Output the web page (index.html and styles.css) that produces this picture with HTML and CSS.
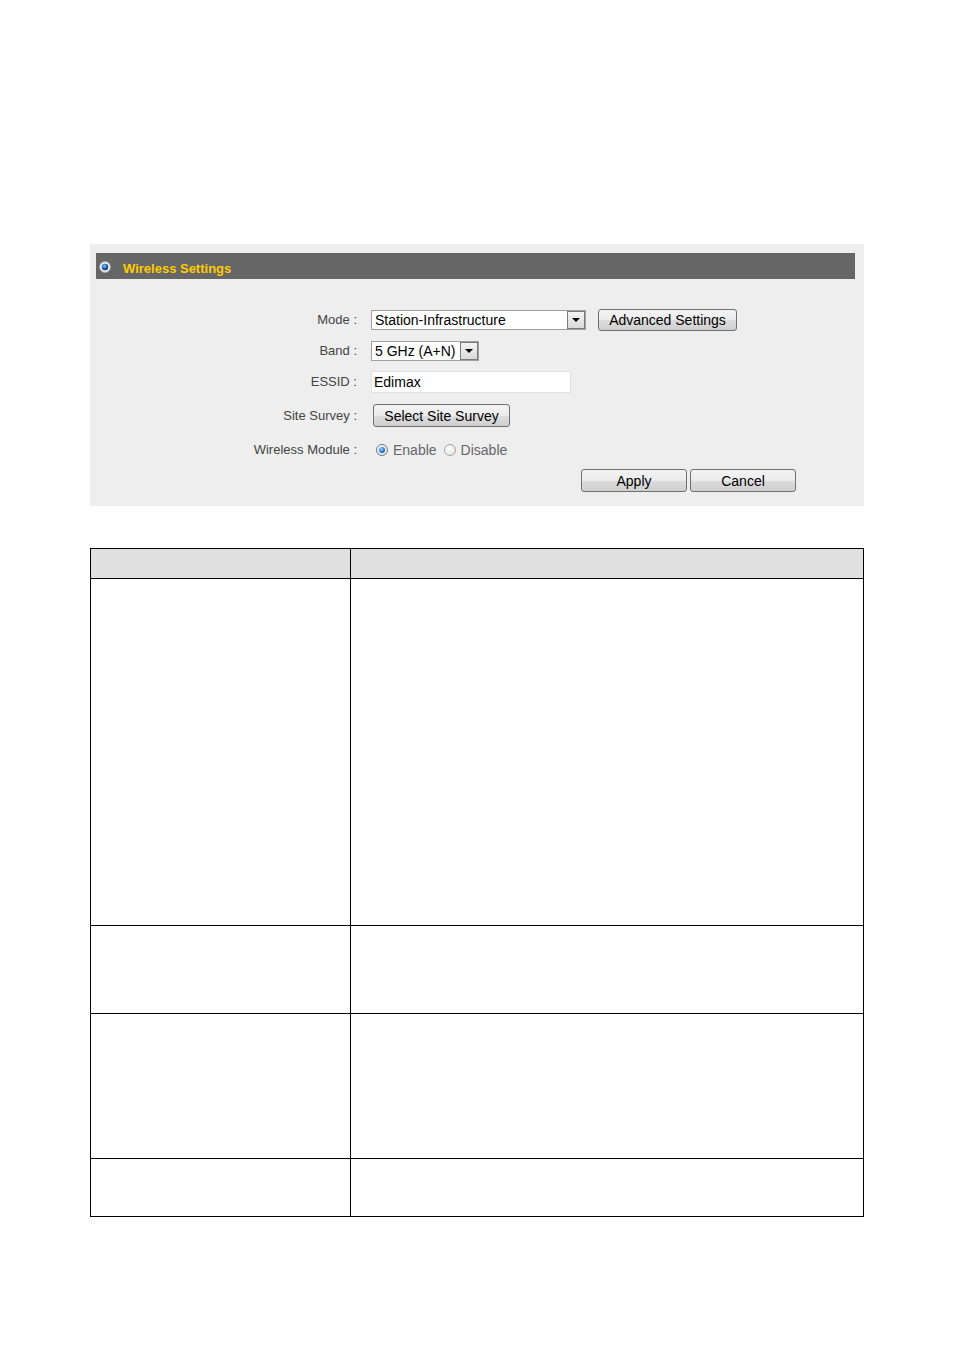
FILE: index.html
```html
<!DOCTYPE html>
<html lang="en">
  <head>
    <meta charset="UTF-8" />
    <meta name="viewport" content="width=device-width, initial-scale=1.0" />
    <title>Wireless Settings</title>
    <link rel="stylesheet" href="styles.css">
  </head>
  <body>
    <div class="page">
      <!-- settings panel -->
      <div class="panel">
        <div class="panel-title">
          <svg class="bullet" width="12" height="12" viewBox="0 0 12 12">
            <defs>
              <radialGradient id="dot" cx="40%" cy="35%" r="60%">
                <stop offset="0%" stop-color="#8fd0ff" />
                <stop offset="60%" stop-color="#1a6cb8" />
                <stop offset="100%" stop-color="#0b3d70" />
              </radialGradient>
            </defs>
            <circle cx="6" cy="6" r="5.5" fill="#e8ecf0" stroke="#9aa3ab" stroke-width="0.8" />
            <circle cx="6" cy="6" r="3.2" fill="url(#dot)" />
          </svg>
          <span class="title-text">Wireless Settings</span>
        </div>

        <div class="form">
          <div class="row">
            <div class="label">Mode :</div>
            <div class="control">
              <div class="select mode">
                <span class="value">Station-Infrastructure</span>
                <span class="arrow"></span>
              </div>
              <button class="btn adv">Advanced Settings</button>
            </div>
          </div>
          <div class="row">
            <div class="label">Band :</div>
            <div class="control">
              <div class="select band">
                <span class="value">5 GHz (A+N)</span>
                <span class="arrow"></span>
              </div>
            </div>
          </div>
          <div class="row">
            <div class="label">ESSID :</div>
            <div class="control">
              <input type="text" class="text-input" value="Edimax" />
            </div>
          </div>
          <div class="row tall">
            <div class="label">Site Survey :</div>
            <div class="control">
              <button class="btn survey">Select Site Survey</button>
            </div>
          </div>
          <div class="row tall">
            <div class="label">Wireless Module :</div>
            <div class="control radios">
              <span class="radio checked"></span><span class="radio-label">Enable</span>
              <span class="radio"></span><span class="radio-label">Disable</span>
            </div>
          </div>
          <div class="actions">
            <button class="btn wide">Apply</button>
            <button class="btn wide">Cancel</button>
          </div>
        </div>
      </div>

      <!-- description table -->
      <table class="desc">
        <tr class="head"><td class="c1"></td><td></td></tr>
        <tr class="r1"><td class="c1"></td><td></td></tr>
        <tr class="r2"><td class="c1"></td><td></td></tr>
        <tr class="r3"><td class="c1"></td><td></td></tr>
        <tr class="r4"><td class="c1"></td><td></td></tr>
      </table>
    </div>
  </body>
</html>
```

FILE: styles.css
```css
* {
  box-sizing: border-box;
}
body {
  margin: 0;
  background-color: #fff;
  font-family: "Liberation Sans", Arial, sans-serif;
}
.page {
  padding: 244px 0 0 90px;
}
.panel {
  width: 774px;
  height: 262px;
  background-color: #eeeeee;
  padding: 9px 9px 0 6px;
}
.panel-title {
  height: 26px;
  background-color: #666666;
  color: #ffcc00;
  font-size: 13px;
  font-weight: bold;
  display: flex;
  align-items: center;
  padding-left: 3px;
}
.bullet {
  margin-right: 12px;
  margin-top: 2px;
}
.title-text {
  padding-top: 4px;
}
.form {
  padding-top: 25px;
  margin-left: -6px;
}
.row {
  display: flex;
  align-items: center;
  height: 31px;
}
.row.tall {
  height: 34px;
  padding-top: 3px;
}
.label {
  width: 268px;
  text-align: right;
  font-size: 13px;
  color: #444;
  padding-right: 1px;
}
.control {
  display: flex;
  align-items: center;
  margin-left: 13px;
}
.select {
  height: 20px;
  border: 1px solid #a0a0a0;
  background-color: #fff;
  display: flex;
  align-items: center;
  font-size: 14px;
}
.select .value {
  flex: 1;
  padding-left: 3px;
  white-space: nowrap;
}
.select .arrow {
  width: 18px;
  height: 18px;
  border: 1px solid #7a7a7a;
  background: linear-gradient(#f4f4f4, #dadada);
  position: relative;
}
.select .arrow::after {
  content: "";
  position: absolute;
  left: 4px;
  top: 6px;
  border-left: 4px solid transparent;
  border-right: 4px solid transparent;
  border-top: 4px solid #000;
}
.mode {
  width: 215px;
}
.band {
  width: 108px;
}
.text-input {
  width: 200px;
  height: 22px;
  border: 1px solid #e0e0e0;
  outline: none;
  font-family: inherit;
  font-size: 14px;
  padding: 0 2px;
  color: #000;
}
.btn {
  height: 22px;
  border: 1px solid #707070;
  border-radius: 3px;
  background: linear-gradient(#f3f3f3 0%, #ebebeb 50%, #dddddd 51%, #cfcfcf 100%);
  font-family: inherit;
  font-size: 14px;
  color: #000;
  padding: 0;
}
.adv {
  width: 139px;
  margin-left: 12px;
}
.survey {
  width: 137px;
  height: 23px;
  margin-left: 2px;
}
.radios {
  font-size: 14px;
  color: #666;
  padding-left: 5px;
}
.radio {
  width: 12px;
  height: 12px;
  border-radius: 50%;
  border: 1px solid #a5a5a5;
  background: radial-gradient(circle at 40% 35%, #fff, #dcdcdc);
  position: relative;
  margin-right: 5px;
}
.radio.checked {
  border-color: #6a7a8a;
}
.radio.checked::after {
  content: "";
  position: absolute;
  left: 2px;
  top: 2px;
  width: 6px;
  height: 6px;
  border-radius: 50%;
  background: radial-gradient(circle at 40% 35%, #9bd6ff, #1c6fbf 60%, #0c3e72);
}
.radio-label {
  margin-right: 7px;
}
.actions {
  display: flex;
  gap: 3px;
  padding-left: 491px;
  padding-top: 4px;
}
.wide {
  width: 106px;
  height: 23px;
}
.desc {
  margin-top: 42px;
  width: 774px;
  border-collapse: collapse;
}
.desc td {
  border: 1px solid #000;
  padding: 0;
}
.desc .c1 {
  width: 260px;
}
.desc .head td {
  background-color: #e0e0e0;
  height: 30px;
}
.desc .r1 td {
  height: 347px;
}
.desc .r2 td {
  height: 88px;
}
.desc .r3 td {
  height: 145px;
}
.desc .r4 td {
  height: 58px;
}
```
